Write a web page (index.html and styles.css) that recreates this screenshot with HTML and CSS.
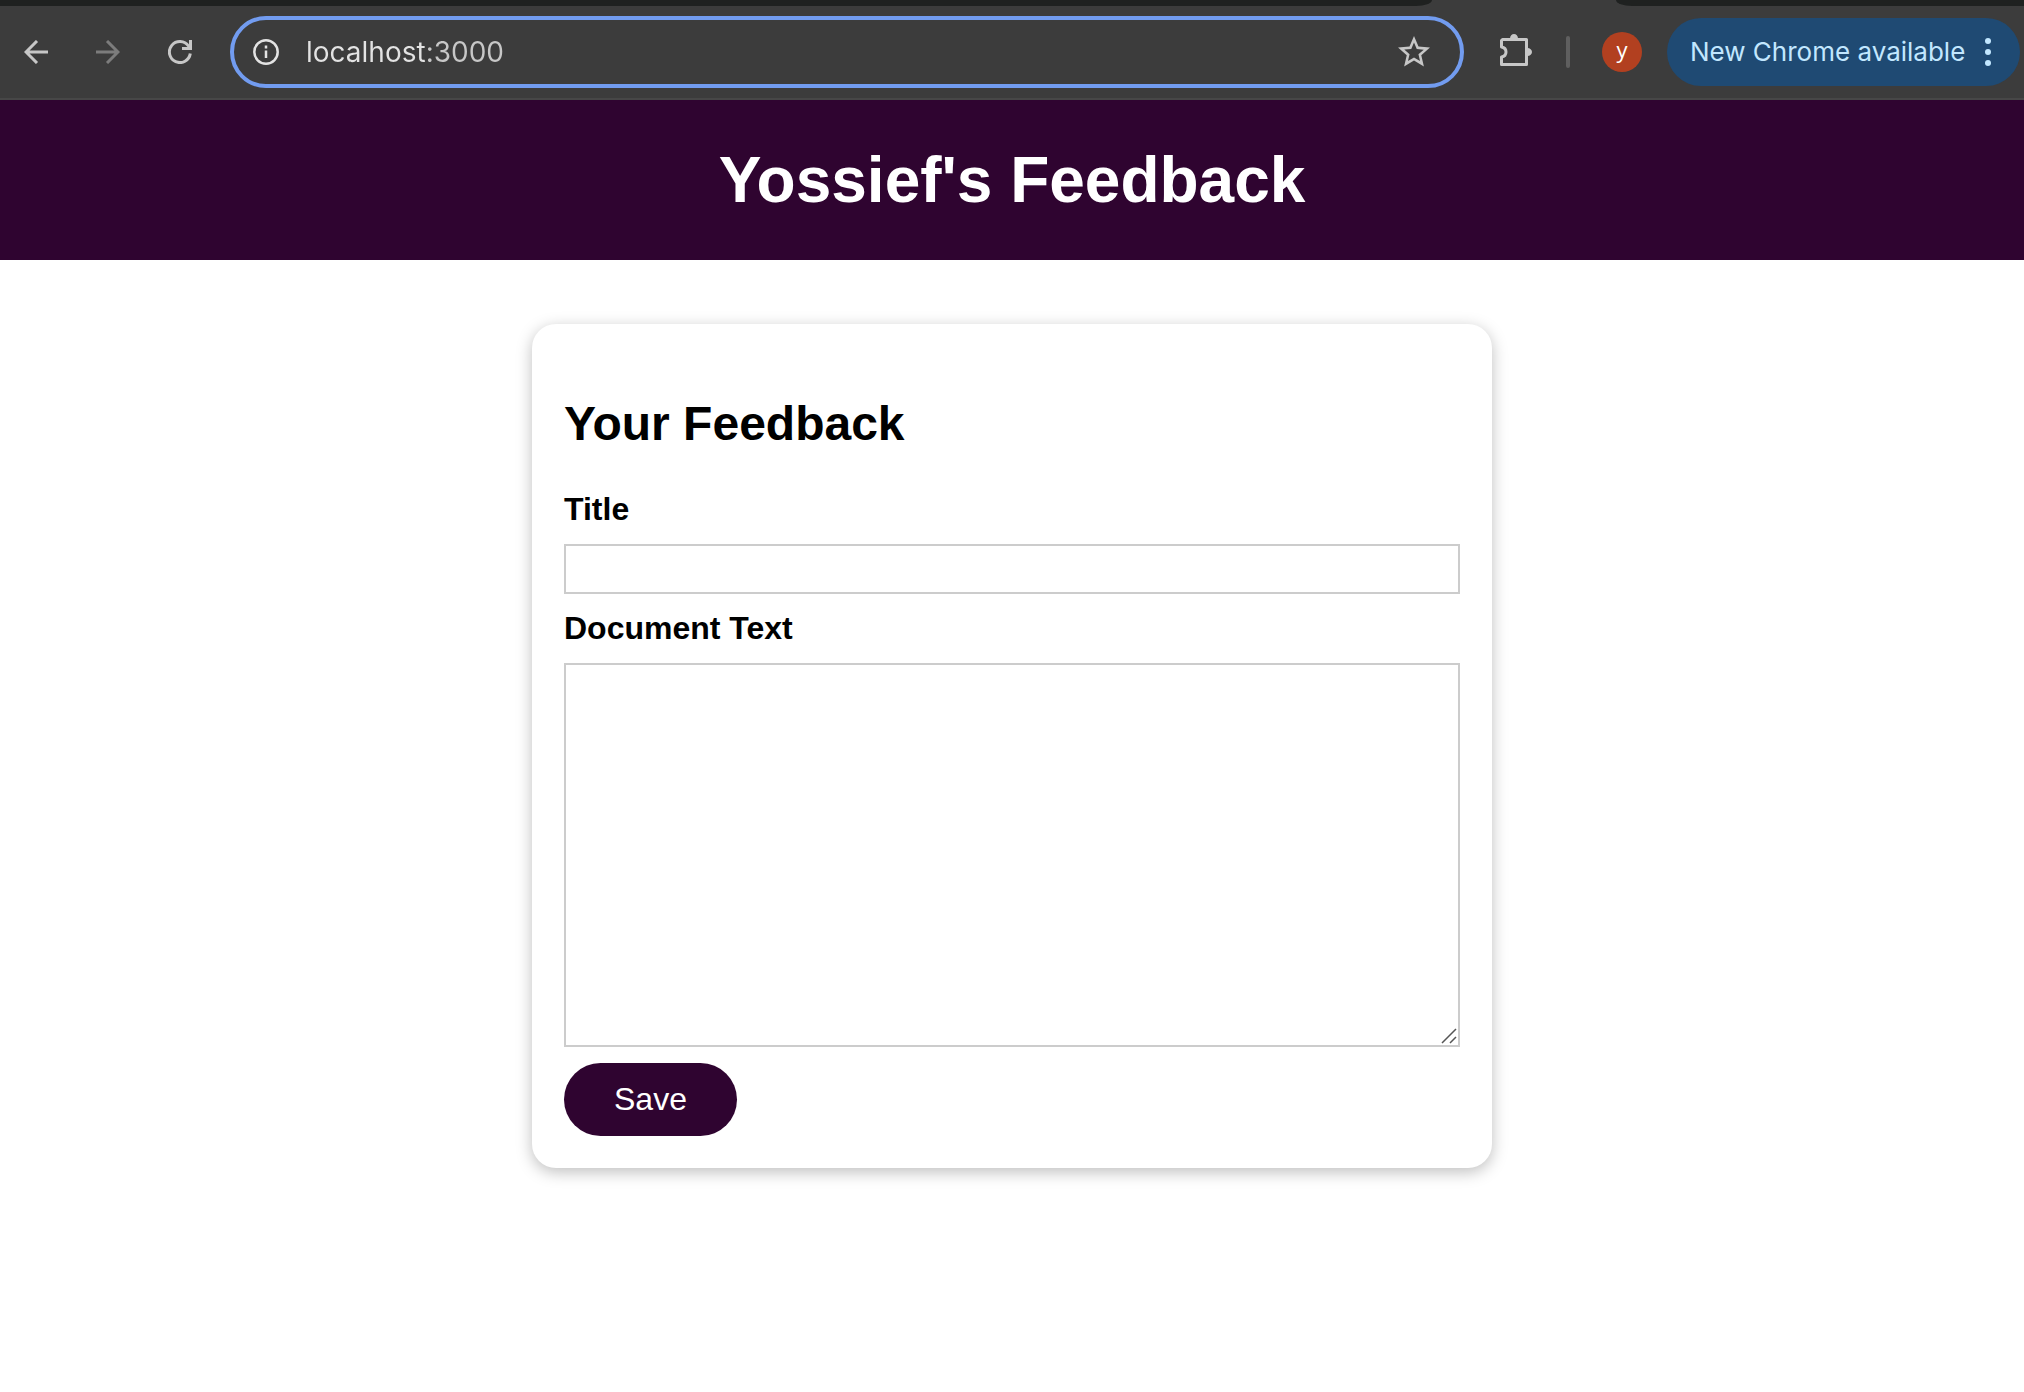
FILE: index.html
```html
<!DOCTYPE html>
<html lang="en">
<head>
<meta charset="utf-8">
<meta name="viewport" content="width=device-width, initial-scale=1">
<title>Yossief's Feedback</title>
<link rel="stylesheet" href="styles.css">
</head>
<body>
<div class="browser">
  <div class="tabs"><span class="tabs-before"></span><span class="tabs-active"></span><span class="tabs-after"></span></div>
  <div class="toolbar">
    <nav class="nav" aria-label="Browser navigation">
      <button class="icon-button" type="button" aria-label="Back">
        <svg width="24" height="24" viewBox="0 0 24 24" fill="none" stroke="#c7c7c7" stroke-width="3"><path d="M24 12H2.500M13 1L2 12l11 11"/></svg>
      </button>
      <button class="icon-button" type="button" aria-label="Forward">
        <svg width="24" height="24" viewBox="0 0 24 24" fill="none" stroke="#7c7c7c" stroke-width="3"><path d="M0 12h21.500M11 1l11 11-11 11"/></svg>
      </button>
      <button class="icon-button" type="button" aria-label="Reload">
        <svg width="24" height="24" viewBox="0 0 24 24" fill="none" stroke="#c7c7c7" stroke-width="3"><path d="M22.300 13.500A10.500 10.500 0 1 1 20.500 6L22 8.500M22.500 0v8.500H14"/></svg>
      </button>
    </nav>
    <div class="address">
      <svg width="26" height="26" viewBox="0 0 26 26" fill="none" stroke="#e3e3e3"><circle cx="13" cy="13" r="11.700" stroke-width="2.500"/><path d="M13 11.500V19M13 6.500v3" stroke-width="2.500"/></svg>
      <input class="address-input" type="text" aria-label="Address" value="localhost:3000">
      <button class="icon-button" type="button" aria-label="Bookmark">
        <svg width="32" height="32" viewBox="2 2 20 20" fill="#c7c7c7"><path d="M22 9.240l-7.190-.62L12 2 9.190 8.630 2 9.240l5.460 4.730L5.820 21 12 17.270 18.180 21l-1.630-7.030L22 9.240zM12 15.400l-3.760 2.270 1-4.280-3.320-2.880 4.380-.38L12 6.100l1.710 4.040 4.380.38-3.320 2.880 1 4.280L12 15.400z"/></svg>
      </button>
    </div>
    <button class="icon-button extensions" type="button" aria-label="Extensions">
      <svg width="32" height="36" viewBox="0 0 32 36"><path d="M2.500 5.500h24V30.500h-25V23c6-1 6-9 0-10V6.500z" fill="none" stroke="#c7c7c7" stroke-width="3" stroke-linejoin="round"/><path d="M10 4.500a4 4.500 0 0 1 8 0zM27.500 14a4.500 4 0 0 1 0 8z" fill="#c7c7c7"/></svg>
    </button>
    <span class="divider"></span>
    <button class="avatar" type="button" aria-label="Profile">y</button>
    <button class="update" type="button">New Chrome available
      <svg width="6" height="28" viewBox="0 0 6 28" fill="#c2e7ff"><circle cx="3" cy="3" r="3"/><circle cx="3" cy="14" r="3"/><circle cx="3" cy="25" r="3"/></svg>
    </button>
  </div>
</div>
<header class="header"><h1 class="header-title">Yossief's Feedback</h1></header>
<main class="main">
  <section class="card">
    <h2 class="card-title">Your Feedback</h2>
    <form class="form">
      <label class="label" for="title">Title</label>
      <input class="field" type="text" id="title" name="title">
      <label class="label" for="text">Document Text</label>
      <div class="text-area">
        <textarea class="field field-text" id="text" name="text"></textarea>
        <svg class="grip" width="16" height="16" viewBox="0 0 16 16" fill="none" stroke="#555" stroke-width="1.500"><path d="M1 15L15 1M9 15l6-6"/></svg>
      </div>
      <button class="save" type="submit">Save</button>
    </form>
  </section>
</main>
</body>
</html>
```
FILE: styles.css
```css
* {
  box-sizing: border-box;
}

body {
  margin: 0;
  background: #fff;
  color: #000;
  font-family: "Liberation Sans", Arial, sans-serif;
}

button {
  border: 0;
  cursor: pointer;
}

svg {
  display: block;
  flex: none;
}

/* Browser bar */
.browser {
  background: #3c3c3c;
  border-bottom: 2px solid #474747;
  font-family: Inter, sans-serif;
}

.tabs {
  display: flex;
  height: 6px;
}

.tabs-before,
.tabs-after {
  background: #1f2120;
}

.tabs-before {
  flex: 1432;
  border-bottom-right-radius: 16px 6px;
}

.tabs-active {
  flex: 184;
}

.tabs-after {
  flex: 408;
  border-bottom-left-radius: 16px 6px;
}

.toolbar {
  display: flex;
  align-items: center;
  height: 92px;
  padding: 0 4px 0 24px;
}

.nav {
  display: flex;
  gap: 48px;
  margin-right: 38px;
}

.icon-button {
  display: flex;
  padding: 0;
  background: none;
}

.address {
  flex: 1;
  display: flex;
  align-items: center;
  height: 72px;
  padding: 0 30px 0 19px;
  border: 4px solid #729cf0;
  border-radius: 36px;
}

/* The host is brighter than the port */
.address-input {
  flex: 1;
  min-width: 0;
  margin-left: 27px;
  padding: 0;
  border: 0;
  outline: 0;
  background: linear-gradient(90deg, #e3e3e3 120px, #c7c7c7 120px);
  background-clip: text;
  -webkit-background-clip: text;
  color: transparent;
  font: 28px/36px Inter, sans-serif;
}

.extensions {
  margin-left: 36px;
}

.divider {
  width: 4px;
  height: 32px;
  margin: 0 32px 0 34px;
  border-radius: 2px;
  background: #5f5f5f;
}

.avatar {
  width: 40px;
  height: 40px;
  margin-right: 25px;
  padding: 0 0 6px;
  border-radius: 50%;
  background: #b24020;
  color: #fff;
  font: 22px/24px "Open Sans", sans-serif;
}

.update {
  display: flex;
  align-items: center;
  justify-content: space-between;
  width: 353px;
  height: 68px;
  padding: 0 29px 0 23px;
  border-radius: 34px;
  background: #1f4a73;
  color: #c2e7ff;
  font: 26px/32px Inter, sans-serif;
  white-space: nowrap;
}

/* Page */
.header {
  display: flex;
  align-items: center;
  justify-content: center;
  min-height: 160px;
  background: #2f0430;
  color: #fff;
}

.header-title {
  margin: 0;
  font-size: 64px;
}

.main {
  padding: 64px 32px;
}

.card {
  max-width: 960px;
  margin: 0 auto;
  padding: 32px;
  border-radius: 24px;
  box-shadow: 0 4px 16px rgba(0, 0, 0, 0.26);
}

.card-title {
  margin: 40px 0;
  font-size: 48px;
  line-height: 55px;
}

.form {
  display: flex;
  flex-direction: column;
  align-items: flex-start;
  gap: 16px;
}

.label {
  font-size: 32px;
  font-weight: bold;
  line-height: 37px;
}

.field {
  display: block;
  width: 100%;
  height: 50px;
  padding: 6px;
  border: 2px solid #ccc;
  border-radius: 0;
  background: #fff;
  font: 28px/34px "Liberation Sans", Arial, sans-serif;
}

.text-area {
  position: relative;
  width: 100%;
}

.field-text {
  height: 384px;
  resize: none;
}

.grip {
  position: absolute;
  right: 3px;
  bottom: 3px;
}

.save {
  padding: 18px 50px;
  border-radius: 37px;
  background: #2f0430;
  color: #fff;
  font: 32px/37px "Liberation Sans", Arial, sans-serif;
}
```
